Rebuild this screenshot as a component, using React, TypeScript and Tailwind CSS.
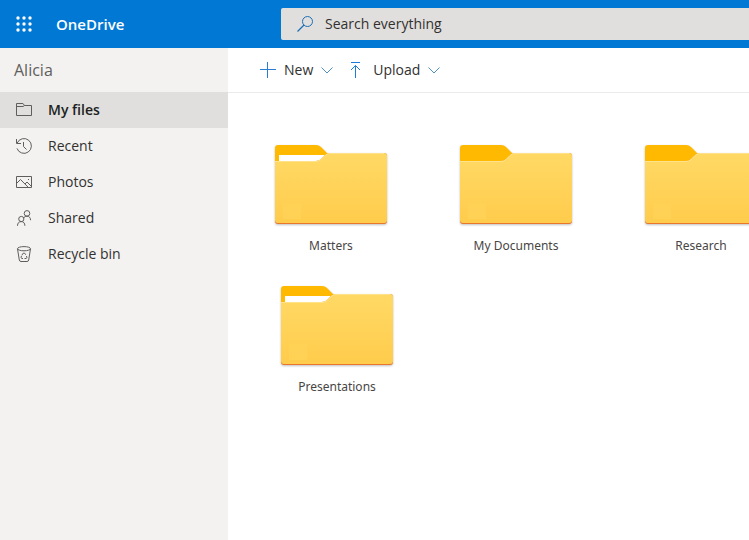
import type { ReactNode } from "react";

interface NavItem {
  label: string;
  icon: ReactNode;
  active?: boolean;
}

interface Folder {
  name: string;
  hasContent?: boolean;
}

function LineIcon({ children }: { children: ReactNode }) {
  return (
    <svg
      className="h-4 w-4 shrink-0 text-[#605e5c]"
      viewBox="0 0 16 16"
      fill="none"
      stroke="currentColor"
      aria-hidden="true"
    >
      {children}
    </svg>
  );
}

const navItems: NavItem[] = [
  {
    label: "My files",
    active: true,
    icon: (
      <LineIcon>
        <path d="M.5 13.5V1.5H7L8.5 3.5H15.5V13.5ZM.5 4.5H7L8.5 3.5" />
      </LineIcon>
    ),
  },
  {
    label: "Recent",
    icon: (
      <LineIcon>
        <path d="M1.2 5A7.4 7.4 0 1 1 1 10.4M.5 1V5.5H5M7.5 4V8.5L10.5 11.5" />
      </LineIcon>
    ),
  },
  {
    label: "Photos",
    icon: (
      <LineIcon>
        <path d="M.5 2.5H15.5V13.5H.5ZM.5 9.5L4.5 5.5L12.3 13.4M9 10L11 8L15.5 12.5" />
        <path d="M12 5.5H13" />
      </LineIcon>
    ),
  },
  {
    label: "Shared",
    icon: (
      <LineIcon>
        <circle cx="11" cy="3.4" r="2.8" />
        <circle cx="5.3" cy="9" r="2.6" />
        <path d="M1.5 15.8C1.5 13 3 11.6 5.3 11.6S8.8 13 8.9 15.8M7.6 8.2C8.2 6.9 9.3 6.2 11 6.2C13.2 6.2 14.5 7.7 14.6 10.2" />
      </LineIcon>
    ),
  },
  {
    label: "Recycle bin",
    icon: (
      <LineIcon>
        <ellipse cx="8" cy="2.7" rx="6.5" ry="2.1" />
        <path d="M1.5 2.9L3.3 14Q3.6 15.5 5 15.5H11Q12.4 15.5 12.7 14L14.5 2.9" />
        <path d="M6 9L7.2 7.2H8.7L9.8 8.8M10.3 10L11 11.2L10.2 12.5H8.5M7 12.5H5.7L5 11.2L5.7 9.7" />
      </LineIcon>
    ),
  },
];

const folderRows: { padding: string; folders: Folder[] }[] = [
  {
    padding: "pl-[47px]",
    folders: [{ name: "Matters", hasContent: true }, { name: "My Documents" }, { name: "Research" }],
  },
  {
    padding: "pl-[53px]",
    folders: [{ name: "Presentations", hasContent: true }],
  },
];

function Chevron() {
  return (
    <svg className="h-3 w-3 text-[#4f8fc0]" viewBox="0 0 12 12" fill="none" stroke="currentColor" aria-hidden="true">
      <path d="M.5 3.5L6 9L11.5 3.5" />
    </svg>
  );
}

function FolderIcon({ hasContent }: { hasContent?: boolean }) {
  return (
    <svg
      className="h-[79px] w-28 drop-shadow-[0_1px_1px_rgba(0,0,0,0.25)]"
      viewBox="0 0 112 79"
      aria-hidden="true"
    >
      <defs>
        <linearGradient id="folder-front" x1="0" y1="0" x2="0" y2="1">
          <stop offset="0" stopColor="#ffd965" />
          <stop offset="1" stopColor="#ffcc4c" />
        </linearGradient>
      </defs>
      <path d="M0 20V3Q0 0 3 0H41Q44 0 46 2L53 9L44 20Z" fill="#ffb900" />
      {hasContent && <path d="M4 10H51L43 18H4Z" fill="#fff" />}
      <path
        d="M0 16H41Q44 16 46 14L50 10Q52 8 55 8H109Q112 8 112 11V76Q112 79 109 79H3Q0 79 0 76Z"
        fill="#e8762c"
      />
      <path
        d="M0 16H41Q44 16 46 14L50 10Q52 8 55 8H109Q112 8 112 11V75Q112 78 109 78H3Q0 78 0 75Z"
        fill="url(#folder-front)"
      />
      <path d="M0 16.5H41Q44 16.5 46 14.5L50 10.5Q52 8.5 55 8.5H109" fill="none" stroke="#ffe28a" />
      <path d="M8 58H26V74H8Z" fill="#ffd359" opacity="0.7" />
    </svg>
  );
}

function Header() {
  return (
    <header className="flex h-12 items-center bg-[#0078d4]">
      <button type="button" aria-label="App launcher" className="flex h-12 w-12 items-center justify-center">
        <svg className="h-4 w-4" viewBox="0 0 16 16" fill="#fff" aria-hidden="true">
          {[2, 8, 14].map((y) =>
            [2, 8, 14].map((x) => <circle key={`${x}-${y}`} cx={x} cy={y} r="1.7" />)
          )}
        </svg>
      </button>
      <a href="#home" className="ml-2 w-[225px] shrink-0 text-[15px] font-semibold text-white">
        OneDrive
      </a>
      <label className="flex h-8 min-w-0 flex-1 items-center gap-3 rounded-l-xs bg-[#e1dfdd] pl-4">
        <svg
          className="h-4 w-4 shrink-0 text-[#1a6fb5]"
          viewBox="0 0 16 16"
          fill="none"
          stroke="currentColor"
          aria-hidden="true"
        >
          <circle cx="10.5" cy="5.5" r="5" />
          <path d="M7 9L.5 15.5" strokeWidth="1.2" />
        </svg>
        <input
          type="search"
          aria-label="Search everything"
          placeholder="Search everything"
          className="min-w-0 flex-1 bg-transparent text-sm outline-none placeholder:text-[#323130]"
        />
      </label>
    </header>
  );
}

function Sidebar() {
  return (
    <nav className="w-57 shrink-0 bg-[#f3f2f1]">
      <h2 className="flex h-11 items-center pl-3.5 text-base text-[#605e5c]">Alicia</h2>
      <ul>
        {navItems.map((item) => (
          <li key={item.label}>
            <a
              href="#files"
              className={`flex h-9 items-center gap-4 pl-4 text-sm ${
                item.active ? "bg-[#e1dfdd] font-semibold text-[#201f1e]" : "text-[#323130]"
              }`}
            >
              {item.icon}
              {item.label}
            </a>
          </li>
        ))}
      </ul>
    </nav>
  );
}

function Toolbar() {
  return (
    <div className="flex h-[45px] items-center gap-4 border-b border-[#edebe9] pl-8 text-sm text-[#323130]">
      <button type="button" className="flex items-center gap-2">
        <svg className="h-4 w-4 text-[#2b7cd3]" viewBox="0 0 16 16" fill="none" stroke="currentColor" aria-hidden="true">
          <path d="M7.5 0V16M0 7.5H16" />
        </svg>
        New
        <Chevron />
      </button>
      <button type="button" className="flex items-center gap-2">
        <svg className="h-4 w-4 text-[#1f7bd8]" viewBox="0 0 16 16" fill="none" stroke="currentColor" aria-hidden="true">
          <path d="M2 .5H11M6.5 16V3.5M2 8L6.5 3.5L11 8" />
        </svg>
        Upload
        <Chevron />
      </button>
    </div>
  );
}

export default function App() {
  return (
    <div className="flex min-h-screen flex-col overflow-hidden bg-white font-['Open_Sans','Noto_Sans',sans-serif]">
      <Header />
      <div className="flex flex-1">
        <Sidebar />
        <main className="min-w-0 flex-1 overflow-hidden">
          <Toolbar />
          <div className="flex flex-col gap-7.5 pt-[52px]">
            {folderRows.map((row) => (
              <ul key={row.padding} className={`flex gap-[73px] ${row.padding}`}>
                {row.folders.map((folder) => (
                  <li key={folder.name} className="w-28 shrink-0">
                    <a href="#folder" className="flex flex-col items-center gap-3">
                      <FolderIcon hasContent={folder.hasContent} />
                      <span className="font-['Noto_Sans','Open_Sans',sans-serif] text-xs leading-5 text-[#484644]">
                        {folder.name}
                      </span>
                    </a>
                  </li>
                ))}
              </ul>
            ))}
          </div>
        </main>
      </div>
    </div>
  );
}
